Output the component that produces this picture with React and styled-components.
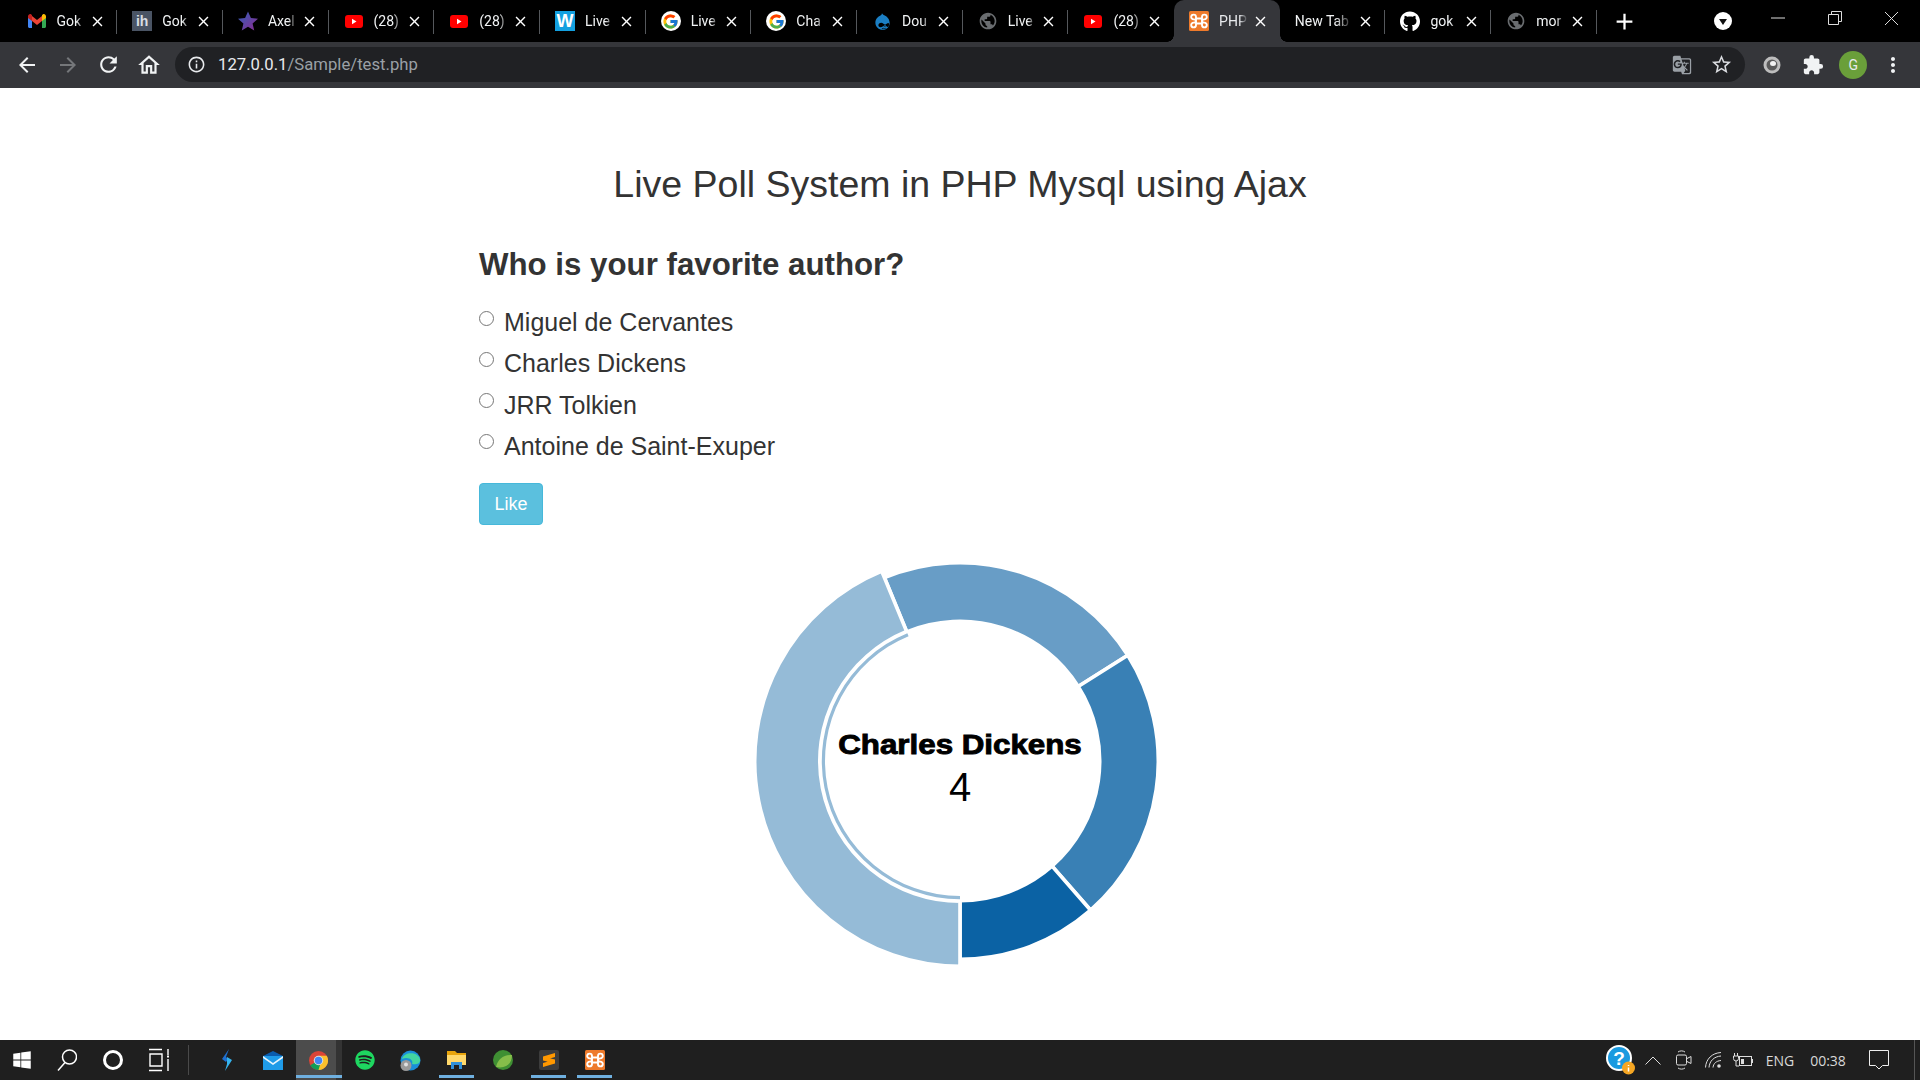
import styled, { createGlobalStyle } from 'styled-components'
import {
  MdArrowBack, MdArrowForward, MdRefresh, MdOutlineHome, MdInfoOutline, MdStarBorder,
  MdExtension, MdMoreVert, MdClose, MdAdd, MdPublic, MdGTranslate,
} from 'react-icons/md'
import { FcGoogle } from 'react-icons/fc'
import { FaGithub, FaDrupal, FaWindows, FaSpotify } from 'react-icons/fa'

const GlobalStyle = createGlobalStyle`
  html, body { margin: 0; padding: 0; height: 100%; background: #fff; }
  #root { height: 100%; }
  * { box-sizing: border-box; }
`

const Gmail = () => (
  <svg width="18" height="14" viewBox="0 0 18 14">
    <path d="M0 2v10.5C0 13.3.7 14 1.5 14H4V6z" fill="#4285f4" />
    <path d="M18 2v10.5c0 .8-.7 1.5-1.5 1.5H14V6z" fill="#34a853" />
    <path d="M4 7V2L9 6l5-4v5L9 11z" fill="#ea4335" />
    <path d="M0 2.5C0 .5 2 -.5 3.200.4L4 1v6L0 4z" fill="#c5221f" />
    <path d="M18 2.500C18 .5 16-.5 14.800.4L14 1v6l4-3z" fill="#fbbc04" />
  </svg>
)

const Ih = styled.span`
  width: 20px;
  height: 20px;
  background: #4a5464;
  color: #d9dde3;
  font: bold 14px "Liberation Sans", sans-serif;
  display: flex;
  align-items: center;
  justify-content: center;
`

const StarFav = () => (
  <svg width="21" height="20" viewBox="0 0 24 23">
    <defs>
      <linearGradient id="st" x1="0" y1="0" x2="1" y2="1">
        <stop offset="0" stopColor="#2f5fb8" />
        <stop offset="1" stopColor="#8e2a90" />
      </linearGradient>
    </defs>
    <polygon points="12,0 15.5,8 24,8.800 17.500,14.500 19.500,23 12,18.500 4.500,23 6.500,14.500 0,8.800 8.500,8" fill="url(#st)" />
  </svg>
)

const YouTube = () => (
  <svg width="18" height="13" viewBox="0 0 18 13">
    <rect width="18" height="13" rx="3" fill="#f00" />
    <polygon points="7,3.800 7,9.200 11.500,6.500" fill="#fff" />
  </svg>
)

const WordFav = styled.span`
  width: 20px;
  height: 20px;
  background: #13a0e0;
  color: #fff;
  font: bold 18px "Liberation Sans", sans-serif;
  display: flex;
  align-items: center;
  justify-content: center;
`

const GoogleFav = styled.span`
  width: 20px;
  height: 20px;
  border-radius: 50%;
  background: #fff;
  display: flex;
  align-items: center;
  justify-content: center;
`

const Xampp = () => (
  <svg width="20" height="20" viewBox="0 0 20 20">
    <rect width="20" height="20" rx="1.500" fill="#ee7a2b" />
    <path
      d="M7 7.500h6v5H7zM7 7.500V6a2.400 2.400 0 1 0-2.400 2.400C5.500 8.400 7 9 7 10s-1.500 1.600-2.400 1.600A2.400 2.400 0 1 0 7 14v-1.500M13 7.500V6a2.400 2.400 0 1 1 2.400 2.400C14.500 8.400 13 9 13 10s1.500 1.600 2.400 1.600A2.400 2.400 0 1 1 13 14v-1.500"
      fill="none"
      stroke="#fff"
      strokeWidth="1.900"
    />
  </svg>
)

const tabs = [
  { title: 'Gok', icon: <Gmail /> },
  { title: 'Gok', icon: <Ih>ih</Ih> },
  { title: 'Axel', icon: <StarFav /> },
  { title: '(28)', icon: <YouTube /> },
  { title: '(28)', icon: <YouTube /> },
  { title: 'Live', icon: <WordFav>W</WordFav> },
  { title: 'Live', icon: <GoogleFav><FcGoogle size={17} /></GoogleFav> },
  { title: 'Cha', icon: <GoogleFav><FcGoogle size={17} /></GoogleFav> },
  { title: 'Dou', icon: <FaDrupal size={19} color="#1b7fc4" /> },
  { title: 'Live', icon: <MdPublic size={22} color="#6a6d70" /> },
  { title: '(28)', icon: <YouTube /> },
  { title: 'PHP', icon: <Xampp />, active: true },
  { title: 'New Tab' },
  { title: 'gok', icon: <FaGithub size={21} color="#fff" /> },
  { title: 'mor', icon: <MdPublic size={22} color="#6a6d70" /> },
]

const CX = 215
const CY = 215

const toXY = (r, deg) => {
  const a = (deg - 90) * Math.PI / 180
  return [CX + r * Math.cos(a), CY + r * Math.sin(a)]
}

const arcPath = (r1, r2, from, to) => {
  const [ax, ay] = toXY(r2, from)
  const [bx, by] = toXY(r2, to)
  const [cx, cy] = toXY(r1, to)
  const [dx, dy] = toXY(r1, from)
  const large = to - from > 180 ? 1 : 0
  return `M${ax} ${ay}A${r2} ${r2} 0 ${large} 1 ${bx} ${by}L${cx} ${cy}A${r1} ${r1} 0 ${large} 0 ${dx} ${dy}Z`
}

const slices = [
  { from: -22.4, to: 57.8, color: '#689dc6' },
  { from: 57.8, to: 138.8, color: '#3980b5' },
  { from: 138.8, to: 180, color: '#0b62a4' },
]

export default function App() {
  return (
    <>
      <GlobalStyle />
      <Screen>
        <TabStrip>
          {tabs.map((t, i) => {
            const nextActive = tabs[i + 1] && tabs[i + 1].active
            return (
              <Tab key={i} $active={t.active} $noSep={t.active || nextActive}>
                {t.icon && <Favicon>{t.icon}</Favicon>}
                <TabTitle>{t.title}</TabTitle>
                <TabClose><MdClose size={17} /></TabClose>
              </Tab>
            )
          })}
          <NewTabButton><MdAdd size={27} /></NewTabButton>
          <TabSearch>
            <svg width="18" height="18" viewBox="0 0 18 18">
              <circle cx="9" cy="9" r="9" fill="#fff" />
              <polygon points="5,7 13,7 9,13" fill="#111" />
            </svg>
          </TabSearch>
          <WindowButtons>
            <WindowButton><svg width="14" height="14" viewBox="0 0 14 14"><path d="M0 7h14" stroke="#ddd" /></svg></WindowButton>
            <WindowButton><svg width="14" height="14" viewBox="0 0 14 14"><path d="M.5 3.500h10v10H.5zM3.500 3.500V.5h10v10h-3" fill="none" stroke="#ddd" /></svg></WindowButton>
            <WindowButton><svg width="15" height="15" viewBox="0 0 15 15"><path d="M1 1l13 13M14 1L1 14" stroke="#ddd" /></svg></WindowButton>
          </WindowButtons>
        </TabStrip>

        <Toolbar>
          <NavButton><MdArrowBack size={24} /></NavButton>
          <NavButton $dim><MdArrowForward size={24} /></NavButton>
          <NavButton><MdRefresh size={25} /></NavButton>
          <NavButton><MdOutlineHome size={26} /></NavButton>
          <Omnibox>
            <MdInfoOutline size={19} color="#e8eaed" />
            <Url>127.0.0.1<UrlPath>/Sample/test.php</UrlPath></Url>
            <OmniRight>
              <MdGTranslate size={20} color="#9aa0a6" />
              <MdStarBorder size={23} color="#dadce0" />
            </OmniRight>
          </Omnibox>
          <ToolbarRight>
            <NavButton>
              <svg width="18" height="18" viewBox="0 0 18 18">
                <circle cx="9" cy="9" r="8.500" fill="#bdbdbd" />
                <circle cx="9" cy="9" r="5.500" fill="#5a5a5a" />
                <ellipse cx="10" cy="7.500" rx="3" ry="2.500" fill="#f2f2f2" />
              </svg>
            </NavButton>
            <NavButton><MdExtension size={22} /></NavButton>
            <NavButton><Avatar>G</Avatar></NavButton>
            <NavButton $narrow><MdMoreVert size={24} /></NavButton>
          </ToolbarRight>
        </Toolbar>

        <Page>
          <PageTitle>Live Poll System in PHP Mysql using Ajax</PageTitle>
          <PollForm>
            <Question>Who is your favorite author?</Question>
            {['Miguel de Cervantes', 'Charles Dickens', 'JRR Tolkien', 'Antoine de Saint-Exuper'].map((o) => (
              <Option key={o}>
                <Radio type="radio" name="author" />
                {o}
              </Option>
            ))}
            <LikeButton type="button">Like</LikeButton>
          </PollForm>
          <Chart>
            <svg width="430" height="430" viewBox="0 0 430 430">
              {slices.map((s) => (
                <path key={s.from} d={arcPath(139.7, 198.3, s.from, s.to)} fill={s.color} stroke="#fff" strokeWidth="3.600" />
              ))}
              <path d={arcPath(140.2, 205.3, 180, 337.6)} fill="#95bbd7" stroke="#fff" strokeWidth="3.600" />
              <path d={arcPath(135, 138.2, 180, 337.6)} fill="#95bbd7" />
              <DonutLabel x="0" y="0" textAnchor="middle" transform={`translate(${CX} ${CY - 7.5}) scale(1.16 1)`}>
                Charles Dickens
              </DonutLabel>
              <DonutValue x={CX} y={CY + 40} textAnchor="middle">4</DonutValue>
            </svg>
          </Chart>
        </Page>

        <Taskbar>
          <TaskIcon $w={44}><FaWindows size={20} color="#fff" /></TaskIcon>
          <TaskIcon>
            <svg width="20" height="23" viewBox="0 0 20 23" fill="none" stroke="#fff" strokeWidth="1.500">
              <circle cx="12.500" cy="8" r="7" />
              <path d="M8 13.500L1 21.500" />
            </svg>
          </TaskIcon>
          <TaskIcon>
            <svg width="20" height="20" viewBox="0 0 20 20"><circle cx="10" cy="10" r="8.500" fill="none" stroke="#fff" strokeWidth="3" /></svg>
          </TaskIcon>
          <TaskIcon>
            <svg width="20" height="24" viewBox="0 0 20 24" fill="none" stroke="#fff" strokeWidth="1.400">
              <path d="M0 1.500h13M0 22.500h13M1 6h12v12H1zM19 1v6M19 11v12" />
              <path d="M18 8.500h2" strokeWidth="2" />
            </svg>
          </TaskIcon>
          <TaskSeparator />
          <TaskIcon>
            <svg width="12" height="22" viewBox="0 0 12 22">
              <path d="M8 0L1 10l4 3 2-3-2-2z" fill="#1e6fd0" />
              <path d="M6 8l5 3-7 11 2-7z" fill="#35b4ee" />
            </svg>
          </TaskIcon>
          <TaskIcon>
            <svg width="20" height="19" viewBox="0 0 20 19">
              <path d="M0 5L10 0l10 5v3H0z" fill="#0b5cad" />
              <rect y="5" width="20" height="14" fill="#1f9be8" />
              <path d="M0 5l10 7 10-7v2l-10 7L0 7z" fill="#e8f4fc" />
            </svg>
          </TaskIcon>
          <TaskIcon $selected $open>
            <svg width="19" height="19" viewBox="0 0 20 20">
              <circle cx="10" cy="10" r="10" fill="#db4437" />
              <path d="M10 10L1.300 15A10 10 0 0 0 13 19.500z" fill="#0f9d58" />
              <path d="M10 5h8.700A10 10 0 0 1 10 20l3-10z" fill="#fbc02d" />
              <circle cx="10" cy="10" r="5" fill="#ddd" />
              <circle cx="10" cy="10" r="3.900" fill="#4285f4" />
            </svg>
          </TaskIcon>
          <TaskIcon><FaSpotify size={20} color="#1ed760" /></TaskIcon>
          <TaskIcon>
            <svg width="21" height="21" viewBox="0 0 21 21">
              <circle cx="10.500" cy="10.500" r="10" fill="#1a8fd8" />
              <path d="M2 9C4 2 17 1 20 9c1 5-5 6-8 5 2-4-4-8-10-5z" fill="#43d6a0" />
              <circle cx="6" cy="15.500" r="5.500" fill="#9a9a9a" />
              <circle cx="6" cy="14.500" r="2" fill="#e0e0e0" />
            </svg>
          </TaskIcon>
          <TaskIcon $open>
            <svg width="19" height="18" viewBox="0 0 19 18">
              <path d="M0 0h8l2 2h9v5H0z" fill="#e8a40c" />
              <rect y="4" width="19" height="10" fill="#ffd86b" />
              <path d="M4 18v-7h11v7h-3v-4H7v4z" fill="#2f8fd8" />
            </svg>
          </TaskIcon>
          <TaskIcon>
            <svg width="20" height="20" viewBox="0 0 20 20">
              <circle cx="10" cy="10" r="10" fill="#3f8f33" />
              <path d="M3 17C5 9 10 5 19 5c0 8-5 14-16 12z" fill="#86bd4a" />
            </svg>
          </TaskIcon>
          <TaskIcon $open>
            <SublimeBox>
              <svg width="12" height="14" viewBox="0 0 12 14">
                <path d="M12 0v4L0 7.500v-4zM12 6.500v4L0 14v-4zM0 3.500l12 3v4L0 7.500z" fill="#ff9800" />
              </svg>
            </SublimeBox>
          </TaskIcon>
          <TaskIcon $open><Xampp /></TaskIcon>

          <Tray>
            <TrayItem $w={31}>
              <svg width="30" height="30" viewBox="0 0 30 30">
                <circle cx="13" cy="13" r="12" fill="#1a9ae0" stroke="#fff" strokeWidth="2" />
                <HelpMark x="13" y="20" textAnchor="middle">?</HelpMark>
                <circle cx="22.500" cy="23" r="6.500" fill="#f5a623" />
                <path d="M22.500 20v1M22.500 22.500v4" stroke="#fff" strokeWidth="1.500" />
              </svg>
            </TrayItem>
            <TrayItem $w={33}>
              <svg width="16" height="9" viewBox="0 0 16 9"><path d="M.5 8.500L8 1l7.500 7.500" fill="none" stroke="#ddd" /></svg>
            </TrayItem>
            <TrayItem $w={30}>
              <svg width="16" height="20" viewBox="0 0 16 20" fill="none" stroke="#ddd">
                <rect x=".5" y="5" width="10" height="10" rx="1.500" />
                <path d="M11 8.500l4-2v7l-4-2M2 2c2-1.500 5-1.500 7 0M2 18c2 1.500 5 1.500 7 0" />
              </svg>
            </TrayItem>
            <TrayItem $w={29}>
              <svg width="17" height="16" viewBox="0 0 17 16" fill="none" stroke="#ddd">
                <path d="M.5 15.500C1 7 7 1 16 .5M4 15.500C4.500 9 9 4.500 16 4M8 15.500c.5-4 3-6.500 8-7" />
                <circle cx="14" cy="14" r="1.800" fill="#ddd" stroke="none" />
              </svg>
            </TrayItem>
            <TrayItem $w={30}>
              <svg width="20" height="15" viewBox="0 0 20 15" fill="none" stroke="#ddd">
                <rect x="6.500" y="3.500" width="12" height="9" />
                <path d="M19.500 6v4" />
                <rect x="8" y="6" width="3" height="5" fill="#ddd" stroke="none" />
                <path d="M1.500 0v3M4.500 0v3M.5 3h5v2.500a2.500 2.500 0 0 1-5 0zM3 8v5h3" />
              </svg>
            </TrayItem>
            <TrayText $w={44}>ENG</TrayText>
            <TrayText $w={52}>00:38</TrayText>
            <TrayItem $w={50}>
              <svg width="20" height="20" viewBox="0 0 20 20">
                <path d="M.5.5h19v15h-6L10 19l-3.500-3.500h-6z" fill="none" stroke="#eee" />
              </svg>
            </TrayItem>
            <ShowDesktop />
          </Tray>
        </Taskbar>
      </Screen>
    </>
  )
}

const Screen = styled.div`
  width: 1920px;
  height: 1080px;
  display: flex;
  flex-direction: column;
  overflow: hidden;
  background: #fff;
`

const TabStrip = styled.div`
  height: 42px;
  flex: none;
  background: #000;
  display: flex;
  padding-left: 11.5px;
`

const Tab = styled.div`
  position: relative;
  width: 105.7px;
  height: 42px;
  flex: none;
  display: flex;
  align-items: center;
  padding: 0 11px 0 15px;
  background: ${(p) => (p.$active ? '#35363a' : 'transparent')};
  border-radius: ${(p) => (p.$active ? '10px 10px 0 0' : '0')};
  color: ${(p) => (p.$active ? '#e8eaed' : '#f1f3f4')};

  &::before {
    content: '';
    display: ${(p) => (p.$active ? 'block' : 'none')};
    position: absolute;
    left: -7px;
    bottom: 0;
    width: 7px;
    height: 7px;
    background: radial-gradient(circle at 0 0, transparent 6.500px, #35363a 7px);
  }

  &::after {
    content: '';
    display: ${(p) => (p.$active || !p.$noSep ? 'block' : 'none')};
    position: absolute;
    right: ${(p) => (p.$active ? '-7px' : '0')};
    top: ${(p) => (p.$active ? 'auto' : '10px')};
    bottom: ${(p) => (p.$active ? '0' : 'auto')};
    height: ${(p) => (p.$active ? '7px' : '24px')};
    width: ${(p) => (p.$active ? '7px' : '1px')};
    background: ${(p) =>
      p.$active ? 'radial-gradient(circle at 100% 0, transparent 6.500px, #35363a 7px)' : '#55585c'};
  }
`

const Favicon = styled.span`
  width: 20px;
  height: 20px;
  flex: none;
  display: flex;
  align-items: center;
  justify-content: center;
  margin-right: 10px;
`

const TabTitle = styled.span`
  flex: 1;
  min-width: 0;
  overflow: hidden;
  white-space: nowrap;
  font: 14px Roboto, sans-serif;
  -webkit-mask-image: linear-gradient(90deg, #000 70%, transparent 100%);
  mask-image: linear-gradient(90deg, #000 70%, transparent 100%);
`

const TabClose = styled.span`
  width: 17px;
  height: 17px;
  flex: none;
  margin-left: 4px;
  color: #fff;
  display: flex;
`

const NewTabButton = styled.div`
  width: 27px;
  margin-left: 14px;
  color: #fff;
  display: flex;
  align-items: center;
`

const TabSearch = styled.div`
  margin-left: 76px;
  display: flex;
  align-items: center;
`

const WindowButtons = styled.div`
  margin-left: auto;
  display: flex;
`

const WindowButton = styled.div`
  width: 57px;
  height: 36px;
  display: flex;
  align-items: center;
  justify-content: center;
`

const Toolbar = styled.div`
  height: 46px;
  flex: none;
  background: #35363a;
  display: flex;
  align-items: center;
  padding: 0 8.500px 1px 7px;
`

const NavButton = styled.div`
  width: ${(p) => (p.$narrow ? '38px' : '40.5px')};
  height: 36px;
  flex: none;
  display: flex;
  align-items: center;
  justify-content: center;
  color: ${(p) => (p.$dim ? '#75777a' : '#f1f3f4')};
`

const Omnibox = styled.div`
  flex: 1;
  height: 35px;
  margin-left: 6px;
  border-radius: 18px;
  background: #202124;
  display: flex;
  align-items: center;
  padding: 0 12px;
`

const Url = styled.span`
  margin-left: 12px;
  font: 16.700px Roboto, sans-serif;
  color: #e8eaed;
`

const UrlPath = styled.span`
  color: #9aa0a6;
`

const OmniRight = styled.div`
  margin-left: auto;
  display: flex;
  align-items: center;
  gap: 18px;
`

const ToolbarRight = styled.div`
  margin-left: 7px;
  display: flex;
  align-items: center;
`

const Avatar = styled.span`
  width: 28px;
  height: 28px;
  border-radius: 50%;
  background: #6a9f3a;
  color: #e8eaed;
  font: 14px Roboto, sans-serif;
  display: flex;
  align-items: center;
  justify-content: center;
`

const Page = styled.main`
  flex: 1;
  min-height: 0;
  color: #333;
  font-family: "Liberation Sans", Arial, sans-serif;
`

const PageTitle = styled.h1`
  margin: 75.500px 0 0;
  text-align: center;
  font-size: 37.500px;
  font-weight: 400;
  line-height: 40px;
`

const PollForm = styled.form`
  margin: 44px 0 0 479px;
  width: 962px;
`

const Question = styled.h3`
  margin: 0 0 20.100px;
  font-size: 31.250px;
  font-weight: 700;
  line-height: 34.400px;
`

const Option = styled.label`
  height: 41.33px;
  display: flex;
  align-items: flex-start;
  font-size: 25px;
  line-height: 41.33px;
`

const Radio = styled.input`
  width: 15px;
  height: 15px;
  margin: 8.500px 10px 0 0;
  flex: none;
`

const LikeButton = styled.button`
  display: block;
  width: 64px;
  height: 42px;
  margin-top: 15.4px;
  padding: 1px 0 0;
  border: 1px solid #46b8da;
  border-radius: 4px;
  background: #5bc0de;
  color: #fff;
  font: 18px "Liberation Sans", Arial, sans-serif;
`

const Chart = styled.div`
  margin-top: 21.5px;
  display: flex;
  justify-content: center;
`

const DonutLabel = styled.text`
  font: bold 27px "Liberation Sans", Arial, sans-serif;
  fill: #000;
  stroke: #000;
  stroke-width: 0.9px;
`

const DonutValue = styled.text`
  font: 40px "Liberation Sans", Arial, sans-serif;
  fill: #000;
`

const Taskbar = styled.footer`
  height: 40px;
  flex: none;
  background: #1f1f1f;
  display: flex;
  align-items: stretch;
`

const TaskIcon = styled.div`
  position: relative;
  width: ${(p) => p.$w || 46}px;
  flex: none;
  display: flex;
  align-items: center;
  justify-content: center;
  background: ${(p) =>
    p.$selected ? 'linear-gradient(90deg, #4c4c4c 0, #4c4c4c 40px, #333 40px)' : 'transparent'};

  &::after {
    content: '';
    display: ${(p) => (p.$open ? 'block' : 'none')};
    position: absolute;
    left: ${(p) => (p.$selected ? '0' : '5.500px')};
    right: ${(p) => (p.$selected ? '0' : '5.500px')};
    bottom: 2px;
    height: 3px;
    background: #6fb0e0;
  }
`

const TaskSeparator = styled.div`
  width: 1px;
  height: 30px;
  align-self: center;
  background: #4a4a4a;
  margin: 0 14.7px 0 6px;
`

const SublimeBox = styled.span`
  width: 20px;
  height: 20px;
  border-radius: 2px;
  background: #3c3c3c;
  display: flex;
  align-items: center;
  justify-content: center;
`

const Tray = styled.div`
  margin-left: auto;
  display: flex;
  align-items: stretch;
`

const TrayItem = styled.div`
  width: ${(p) => p.$w}px;
  display: flex;
  align-items: center;
  justify-content: center;
`

const TrayText = styled(TrayItem)`
  font: 14px "Open Sans", sans-serif;
  color: #d8d8d8;
`

const HelpMark = styled.text`
  font: bold 19px "Liberation Sans", sans-serif;
  fill: #fff;
`

const ShowDesktop = styled.div`
  width: 11px;
  border-right: 1px solid #555;
  margin-right: 5px;
`
